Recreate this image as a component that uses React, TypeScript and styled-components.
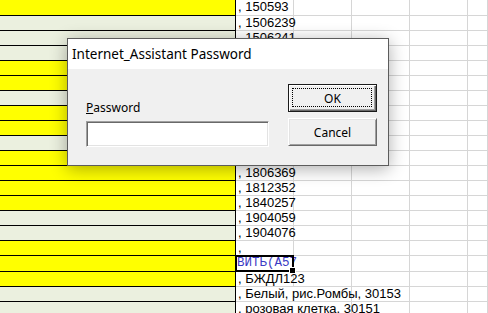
import React from 'react';
import styled, { createGlobalStyle } from 'styled-components';

const GlobalStyle = createGlobalStyle`
  html, body {
    margin: 0;
    padding: 0;
    background: #ffffff;
    overflow: hidden;
  }
`;

type Fill = 'yellow' | 'light';

interface RowData {
    fill: Fill;
    text?: string;
    span?: number;
    tall?: boolean;
    selected?: boolean;
}

const rows: RowData[] = [
    { fill: 'yellow', text: ', 150593', tall: true },
    { fill: 'light', text: ', 1506239' },
    { fill: 'light', text: ', 1506241' },
    { fill: 'light' },
    { fill: 'yellow' },
    { fill: 'yellow' },
    { fill: 'light' },
    { fill: 'yellow' },
    { fill: 'yellow' },
    { fill: 'light' },
    { fill: 'yellow' },
    { fill: 'yellow', text: ', 1806369' },
    { fill: 'yellow', text: ', 1812352' },
    { fill: 'yellow', text: ', 1840257' },
    { fill: 'light', text: ', 1904059' },
    { fill: 'light', text: ', 1904076' },
    { fill: 'yellow', text: ',' },
    { fill: 'yellow', text: 'ВИТЬ(А57', selected: true, tall: true },
    { fill: 'yellow', text: ', БЖДЛ123' },
    { fill: 'light', text: ', Белый, рис.Ромбы, 30153', span: 2 },
    { fill: 'light', text: ', розовая клетка, 30151', span: 2 },
];

const Sheet = styled.div`
    position: relative;
    width: 488px;
    height: 313px;
    overflow: hidden;
    display: flex;
    flex-direction: column;
`;

const Row = styled.div<{ $tall?: boolean }>`
    display: grid;
    grid-template-columns: 236px 58px 58px 58px 58px 1fr;
    height: ${(p) => (p.$tall ? 16 : 15)}px;
    flex: none;
`;

const FillCell = styled.div<{ $fill: Fill }>`
    box-sizing: border-box;
    background: ${(p) => (p.$fill === 'yellow' ? '#ffff00' : '#ebf0df')};
    border-bottom: 1px solid #000;
    border-right: 1px solid #000;
`;

const Cell = styled.div<{ $span?: number }>`
    box-sizing: border-box;
    grid-column: span ${(p) => p.$span || 1};
    border-bottom: 1px solid #d6d6d6;
    border-right: 1px solid #d6d6d6;
    padding-left: 2px;
    font-family: 'Liberation Sans', Arial, sans-serif;
    font-size: 13px;
    line-height: 14px;
    color: #000;
    white-space: nowrap;
    position: relative;
`;

const EditCell = styled(Cell)`
    font-family: 'Liberation Mono', 'Courier New', monospace;
    font-size: 12.5px;
    line-height: 12px;
    color: #3b3bc4;
    padding-left: 1px;
    padding-top: 1px;

    &::after {
        content: '';
        position: absolute;
        left: -1px;
        top: -1px;
        right: -1px;
        bottom: -1px;
        border: 2px solid #000;
    }
`;

const FillHandle = styled.span`
    position: absolute;
    right: -3px;
    bottom: -3px;
    width: 5px;
    height: 5px;
    background: #000;
    border: 1px solid #fff;
    z-index: 2;
`;

const Dialog = styled.div`
    position: absolute;
    left: 67px;
    top: 38px;
    width: 322px;
    height: 128px;
    box-sizing: border-box;
    border: 1px solid #5c5c5c;
    background: #f0f0f0;
    box-shadow: 0 3px 16px rgba(0, 0, 0, 0.32);
    display: flex;
    flex-direction: column;
    font-family: 'Noto Sans', 'Open Sans', sans-serif;
    color: #000;
`;

const TitleBar = styled.div`
    height: 30px;
    background: #ffffff;
    display: flex;
    align-items: center;
    padding-left: 4px;
    font-size: 13.5px;
    flex: none;
`;

const Body = styled.div`
    flex: 1;
    display: flex;
    align-items: flex-start;
    gap: 19px;
    padding: 15px 11px 0 18px;
`;

const Field = styled.div`
    width: 183px;
    margin-top: 15px;
    display: flex;
    flex-direction: column;
    gap: 4px;
`;

const Label = styled.label`
    font-size: 12px;
    line-height: 18px;
    height: 18px;
`;

const Input = styled.div`
    box-sizing: border-box;
    height: 26px;
    background: #fff;
    border: 1px solid;
    border-color: #a0a0a0 #ffffff #ffffff #a0a0a0;
    box-shadow: inset 1px 1px 0 #696969, inset -1px -1px 0 #e3e3e3;
`;

const Buttons = styled.div`
    width: 89px;
    display: flex;
    flex-direction: column;
    gap: 6px;
`;

const Button = styled.div<{ $default?: boolean }>`
    position: relative;
    box-sizing: border-box;
    height: 28px;
    display: flex;
    align-items: center;
    justify-content: center;
    font-size: 12px;
    background: #f0f0f0;
    border: 1px solid;
    border-color: ${(p) => (p.$default ? '#1a1a1a' : '#ffffff #696969 #696969 #ffffff')};
    box-shadow: ${(p) =>
        p.$default
            ? 'inset 1px 1px 0 #ffffff, inset -1px -1px 0 #696969, inset -2px -2px 0 #a0a0a0'
            : 'inset 1px 1px 0 #e3e3e3, inset -1px -1px 0 #a0a0a0'};

    ${(p) =>
        p.$default &&
        `&::after {
            content: '';
            position: absolute;
            left: 3px;
            top: 3px;
            right: 4px;
            bottom: 4px;
            border: 1px dotted #000;
        }`}
`;

export default function App() {
    return (
        <>
            <GlobalStyle />
            <Sheet>
                {rows.map((r, i) => {
                    const rest = 5 - (r.span || 1);
                    return (
                        <Row key={i} $tall={r.tall}>
                            <FillCell $fill={r.fill} />
                            {r.selected ? (
                                <EditCell>
                                    {r.text}
                                    <FillHandle />
                                </EditCell>
                            ) : (
                                <Cell $span={r.span}>{r.text}</Cell>
                            )}
                            {Array.from({ length: rest }).map((_, j) => (
                                <Cell key={j} />
                            ))}
                        </Row>
                    );
                })}

                <Dialog>
                    <TitleBar>Internet_Assistant Password</TitleBar>
                    <Body>
                        <Field>
                            <Label>
                                <u>P</u>assword
                            </Label>
                            <Input />
                        </Field>
                        <Buttons>
                            <Button $default>OK</Button>
                            <Button>Cancel</Button>
                        </Buttons>
                    </Body>
                </Dialog>
            </Sheet>
        </>
    );
}
